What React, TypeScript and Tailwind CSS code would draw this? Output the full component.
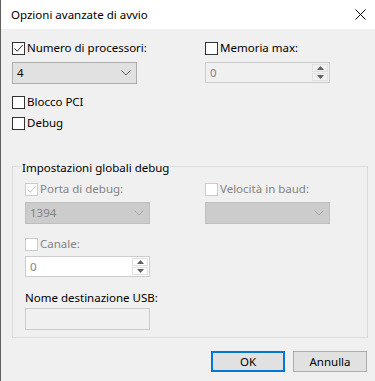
import React from 'react';

const font = { fontFamily: '"Segoe UI", "Noto Sans", sans-serif' };

function Check({ checked = false, disabled = false }: { checked?: boolean; disabled?: boolean }) {
    return (
        <span className={`w-[13px] h-[13px] shrink-0 border bg-white flex items-center justify-center ${disabled ? 'border-[#cccccc]' : 'border-[#333333]'}`}>
            {checked && (
                <svg width="11" height="11" viewBox="0 0 11 11">
                    <path d="M1.5 5.5 L4.2 8.2 L9.8 2" fill="none" stroke={disabled ? '#c2c2c2' : '#333333'} strokeWidth="1" />
                </svg>
            )}
        </span>
    );
}

function CheckRow({ label, checked, disabled }: { label: string; checked?: boolean; disabled?: boolean }) {
    return (
        <div className="flex items-center h-[14px] gap-[2px]">
            <Check checked={checked} disabled={disabled} />
            <span className={`leading-[14px] ${disabled ? 'text-[#838383]' : 'text-black'}`}>{label}</span>
        </div>
    );
}

function Chevron({ color }: { color: string }) {
    return (
        <svg width="10" height="6" viewBox="0 0 10 6">
            <path d="M0.5 0.5 L5 5 L9.5 0.5" fill="none" stroke={color} strokeWidth="1" />
        </svg>
    );
}

function Select({ value, disabled }: { value: string; disabled?: boolean }) {
    return (
        <div className={`w-[125px] h-[22px] border flex items-center justify-between pl-[4px] pr-[5px] ${disabled ? 'bg-[#cccccc] border-[#bfbfbf] text-[#838383]' : 'bg-[#e1e1e1] border-[#adadad] text-black'}`}>
            <span className="leading-[14px]">{value}</span>
            <Chevron color={disabled ? '#a8a8a8' : '#606060'} />
        </div>
    );
}

function Spin({ value, bg }: { value: string; bg: string }) {
    return (
        <div className={`w-[125px] h-[21px] border border-[#cccccc] flex ${bg}`}>
            <span className="flex-1 pl-[4px] leading-[19px] text-[#838383]">{value}</span>
            <div className="w-[18px] flex flex-col gap-[1px] p-[1px]">
                <div className="flex-1 border border-[#e0e0e0] flex items-center justify-center">
                    <svg width="7" height="4" viewBox="0 0 7 4"><path d="M0 4 L3.5 0 L7 4 Z" fill="#606060" /></svg>
                </div>
                <div className="flex-1 border border-[#e0e0e0] flex items-center justify-center">
                    <svg width="7" height="4" viewBox="0 0 7 4"><path d="M0 0 L3.5 4 L7 0 Z" fill="#606060" /></svg>
                </div>
            </div>
        </div>
    );
}

export default function App() {
    return (
        <div style={font} className="w-[375px] h-[381px] flex flex-col bg-[#f0f0f0] border-l border-[#5f5f5f] text-[11.5px] overflow-hidden">
            <div className="h-[29px] bg-white flex items-center justify-between pl-[10px] pr-[8px]">
                <span className="leading-[16px] text-black">Opzioni avanzate di avvio</span>
                <svg width="11" height="11" viewBox="0 0 11 11" className="mr-[1px]">
                    <path d="M0.5 0.5 L10.5 10.5 M10.5 0.5 L0.5 10.5" stroke="#000" strokeWidth="1" />
                </svg>
            </div>

            <div className="flex flex-col pl-[11px]">
                <div className="flex mt-[12px]">
                    <div className="w-[193px] flex flex-col">
                        <CheckRow label="Numero di processori:" checked />
                        <div className="mt-[7px]"><Select value="4" /></div>
                        <div className="mt-[11px]"><CheckRow label="Blocco PCI" /></div>
                        <div className="mt-[7px]"><CheckRow label="Debug" /></div>
                    </div>
                    <div className="flex flex-col">
                        <CheckRow label="Memoria max:" />
                        <div className="mt-[7px]"><Spin value="0" bg="bg-[#f0f0f0]" /></div>
                    </div>
                </div>

                <div className="relative mt-[36px] w-[356px] h-[172px] border border-[#dcdcdc] pl-[12px]">
                    <span className="absolute left-[8px] top-[-6px] px-[1px] bg-[#f0f0f0] leading-[14px] text-black">Impostazioni globali debug</span>
                    <div className="flex mt-[15px]">
                        <div className="w-[180px] flex flex-col">
                            <CheckRow label="Porta di debug:" checked disabled />
                            <div className="mt-[6px]"><Select value="1394" disabled /></div>
                            <div className="mt-[13px]"><CheckRow label="Canale:" disabled /></div>
                            <div className="mt-[5px]"><Spin value="0" bg="bg-white" /></div>
                            <span className="mt-[13px] leading-[15px] text-black">Nome destinazione USB:</span>
                            <div className="mt-[3px] w-[125px] h-[22px] border border-[#cccccc] bg-[#f0f0f0]" />
                        </div>
                        <div className="flex flex-col">
                            <CheckRow label="Velocità in baud:" disabled />
                            <div className="mt-[6px]"><Select value="" disabled /></div>
                        </div>
                    </div>
                </div>

                <div className="flex justify-end gap-[8px] mt-[13px] pr-[8px]">
                    <button className="w-[74px] h-[21px] border-2 border-[#0078d7] bg-[#e1e1e1] text-black leading-[15px]">OK</button>
                    <button className="w-[74px] h-[21px] border border-[#adadad] bg-[#e1e1e1] text-black leading-[17px]">Annulla</button>
                </div>
            </div>
        </div>
    );
}
